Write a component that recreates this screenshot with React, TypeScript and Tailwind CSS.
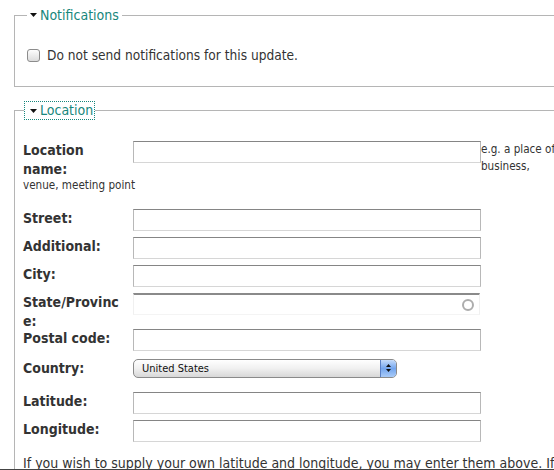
import { Fragment } from "react";

const font = { fontFamily: '"DejaVu Sans Condensed", "DejaVu Sans", sans-serif' };

function TextInput() {
  return (
    <input
      type="text"
      className="h-[22px] w-[348px] shrink-0 border border-t-[#858585] border-x-[#b8b8b8] border-b-[#d6d6d6] bg-white px-1 text-[13px] outline-none"
    />
  );
}

function Label({ children, breakAll }: { children: React.ReactNode; breakAll?: boolean }) {
  return (
    <label
      className={`w-[110px] shrink-0 pr-[8px] text-[14px] font-bold leading-[19px] text-[#333] ${
        breakAll ? "break-all" : ""
      }`}
    >
      {children}
    </label>
  );
}

function Triangle() {
  return (
    <svg width="7" height="4" viewBox="0 0 7 4" className="mr-[3px] shrink-0">
      <path d="M0 0h7L3.5 4z" fill="#111" />
    </svg>
  );
}

const simpleRows = [
  { label: "Street:", mt: "mt-[15px]" },
  { label: "Additional:", mt: "mt-[6px]" },
  { label: "City:", mt: "mt-[6px]" },
];

export default function App() {
  return (
    <div style={font} className="relative h-[470px] w-[554px] overflow-hidden border-b border-b-[#444] bg-white pl-[14px] pt-[5px] text-[#333]">
      <fieldset className="w-[600px] border border-[#b5b5b5] px-[12px] pb-[21px] pt-[20px]">
        <legend className="flex items-center px-[3px] text-[14px] leading-[20px] text-[#17877c]">
          <Triangle />
          Notifications
        </legend>
        <div className="flex items-center gap-[7px]">
          <input
            type="checkbox"
            className="h-[13px] w-[13px] appearance-none rounded-[3px] border border-[#8c8c8c] bg-gradient-to-b from-[#fdfdfd] to-[#dcdcdc]"
          />
          <span className="text-[13.6px] leading-[20px]">Do not send notifications for this update.</span>
        </div>
      </fieldset>

      <fieldset className="mt-[14px] w-[600px] border border-[#b5b5b5] px-[8px] pb-[20px] pt-[21px]">
        <legend className="ml-[1px] flex items-center border border-dotted border-[#17877c] pl-[5px] pr-[1px] text-[14px] leading-[17px] text-[#17877c]">
          <Triangle />
          Location
        </legend>

        <div className="flex items-start">
          <Label>Location name:</Label>
          <TextInput />
          <div className="whitespace-nowrap text-[11.6px] leading-[17px]">
            e.g. a place of
            <br />
            business,
          </div>
        </div>
        <div className="-mt-[2px] text-[11.6px] leading-[17px]">venue, meeting point</div>

        {simpleRows.map((r) => (
          <div key={r.label} className={`flex items-start ${r.mt}`}>
            <Label>{r.label}</Label>
            <TextInput />
          </div>
        ))}

        <div className="mt-[6px] flex h-[36px] items-start">
          <Label breakAll>State/Province:</Label>
          <div className="relative h-[22px] w-[347px] shrink-0 border-t-2 border-t-[#8a8a8a] border-x border-x-[#f0f0f0] border-b border-b-[#f4f4f4] bg-white">
            <span className="absolute right-[5px] top-[4px] h-[12px] w-[12px] rounded-full border-2 border-[#adadad]" />
          </div>
        </div>

        <div className="flex items-start">
          <Label>Postal code:</Label>
          <TextInput />
        </div>

        <div className="mt-[6px] flex h-[22px] items-center">
          <Label>Country:</Label>
          <div className="flex h-[19px] w-[264px] shrink-0 overflow-hidden rounded-[5px] border border-[#8a8a8a] bg-gradient-to-b from-[#ffffff] via-[#f0f0f0] to-[#d8d8d8]">
            <select className="h-full flex-1 appearance-none bg-transparent pl-[8px] text-[11px] leading-[17px] text-[#111] outline-none">
              <option>United States</option>
            </select>
            <div className="flex w-[16px] flex-col items-center justify-center gap-[2px] border-l border-[#5a7fc4] bg-gradient-to-b from-[#c6dcfa] via-[#73a5ee] to-[#a9cbf7]">
              <svg width="5" height="3" viewBox="0 0 5 3">
                <path d="M2.5 0L5 3H0z" fill="#111" />
              </svg>
              <svg width="5" height="3" viewBox="0 0 5 3">
                <path d="M0 0h5L2.5 3z" fill="#111" />
              </svg>
            </div>
          </div>
        </div>

        {["Latitude:", "Longitude:"].map((l, i) => (
          <Fragment key={l}>
            <div className={`flex items-start ${i === 0 ? "mt-[13px]" : "mt-[6px]"}`}>
              <Label>{l}</Label>
              <TextInput />
            </div>
          </Fragment>
        ))}

        <p className="mt-[11px] text-[14px] leading-[20px]">
          If you wish to supply your own latitude and longitude, you may enter them above. If you leave these fields blank, the system will attempt to determine a latitude and longitude for you from the entered address.
        </p>
      </fieldset>
    </div>
  );
}
